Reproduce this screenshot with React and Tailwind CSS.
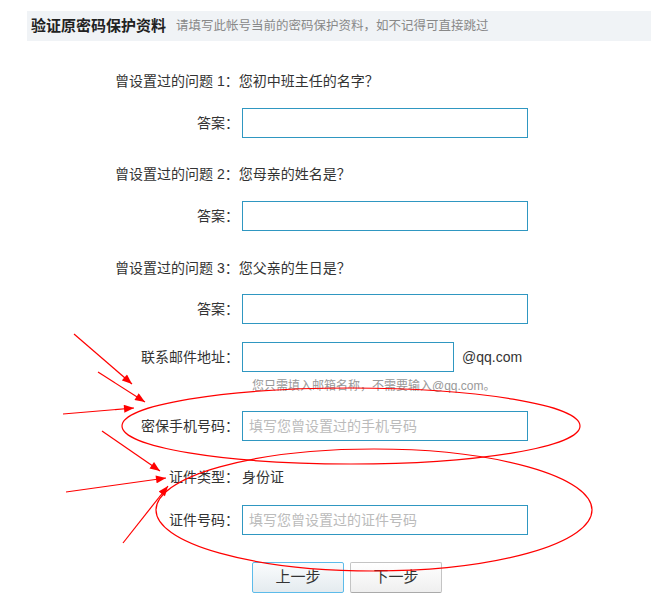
const fieldCls =
  "ml-[3px] h-[30px] border border-[#2f97c1] bg-white px-[6px] text-[14px] text-[#333] outline-none placeholder:text-[#bbb]";

const Label = ({ children }) => (
  <label className="w-[124px] shrink-0 text-right text-[14px] leading-[20px] text-[#333]">
    {children}
  </label>
);

const Question = ({ n, text, className }) => (
  <p className={`h-[20px] text-[14px] leading-[20px] text-[#333] ${className}`}>
    曾设置过的问题 {n}：{text}
  </p>
);

const Arrow = ({ x1, y1, x2, y2 }) => (
  <line x1={x1} y1={y1} x2={x2} y2={y2} stroke="#ff0000" strokeWidth="1.2" markerEnd="url(#head)" />
);

const App = () => {
  return (
    <div className="relative w-[651px] h-[616px] overflow-hidden bg-white font-['Liberation_Sans','Noto_Sans_CJK_SC',sans-serif]">
      {/* title bar */}
      <div className="ml-[27px] mt-[11px] h-[30px] bg-[#f0f3f6] pl-[4px] flex items-center gap-[10px]">
        <h2 className="text-[15px] font-bold text-[#222]">验证原密码保护资料</h2>
        <span className="text-[12.5px] text-[#888]">请填写此帐号当前的密码保护资料，如不记得可直接跳过</span>
      </div>

      {/* form */}
      <div className="pl-[115px]">
        <Question n="1" text="您初中班主任的名字？" className="mt-[30px]" />
        <div className="mt-[17px] flex items-center">
          <Label>答案：</Label>
          <input className={`${fieldCls} w-[286px]`} />
        </div>

        <Question n="2" text="您母亲的姓名是？" className="mt-[26px]" />
        <div className="mt-[17px] flex items-center">
          <Label>答案：</Label>
          <input className={`${fieldCls} w-[286px]`} />
        </div>

        <Question n="3" text="您父亲的生日是？" className="mt-[27px]" />
        <div className="mt-[16px] flex items-center">
          <Label>答案：</Label>
          <input className={`${fieldCls} w-[286px]`} />
        </div>

        <div className="mt-[18px] flex items-center">
          <Label>联系邮件地址：</Label>
          <input className={`${fieldCls} w-[212px]`} />
          <span className="ml-[8px] text-[14px] text-[#333]">@qq.com</span>
        </div>
        <p className="mt-[6px] ml-[137px] h-[16px] text-[12px] leading-[16px] text-[#999]">
          您只需填入邮箱名称，不需要输入@qq.com。
        </p>

        <div className="mt-[17px] flex items-center">
          <Label>密保手机号码：</Label>
          <input className={`${fieldCls} w-[286px]`} placeholder="填写您曾设置过的手机号码" />
        </div>

        <div className="mt-[26px] flex items-center h-[20px]">
          <Label>证件类型：</Label>
          <span className="ml-[3px] text-[14px] text-[#333]">身份证</span>
        </div>

        <div className="mt-[18px] flex items-center">
          <Label>证件号码：</Label>
          <input className={`${fieldCls} w-[286px]`} placeholder="填写您曾设置过的证件号码" />
        </div>

        {/* buttons */}
        <div className="mt-[27px] ml-[137px] flex gap-[6px]">
          <button className="w-[92px] h-[31px] rounded-[2px] border border-[#5cbbea] bg-gradient-to-b from-[#fafcfd] to-[#e4ebef] text-[15px] text-[#333]">
            上一步
          </button>
          <button className="w-[92px] h-[31px] rounded-[2px] border border-[#c4c4c4] border-b-[#aaa] bg-gradient-to-b from-white to-[#efefef] text-[15px] text-[#333]">
            下一步
          </button>
        </div>
      </div>

      {/* red hand-drawn annotations */}
      <svg className="pointer-events-none absolute inset-0" width="651" height="616" viewBox="0 0 651 616">
        <defs>
          <marker id="head" viewBox="0 0 10 8" refX="10" refY="4" markerWidth="11" markerHeight="8" markerUnits="userSpaceOnUse" orient="auto">
            <path d="M0 0 L10 4 L0 8 Z" fill="#ff0000" />
          </marker>
        </defs>
        <ellipse cx="351" cy="426" rx="229" ry="38" fill="none" stroke="#ff0000" strokeWidth="1.2" />
        <ellipse cx="374" cy="510" rx="218" ry="61" fill="none" stroke="#ff0000" strokeWidth="1.2" />
        <Arrow x1={74} y1={334} x2={132} y2={384} />
        <Arrow x1={98} y1={372} x2={145} y2={402} />
        <Arrow x1={63} y1={414} x2={134} y2={408} />
        <Arrow x1={102} y1={431} x2={160} y2={471} />
        <Arrow x1={66} y1={492} x2={166} y2={478} />
        <Arrow x1={123} y1={543} x2={168} y2={486} />
      </svg>
    </div>
  );
};

export default App;
